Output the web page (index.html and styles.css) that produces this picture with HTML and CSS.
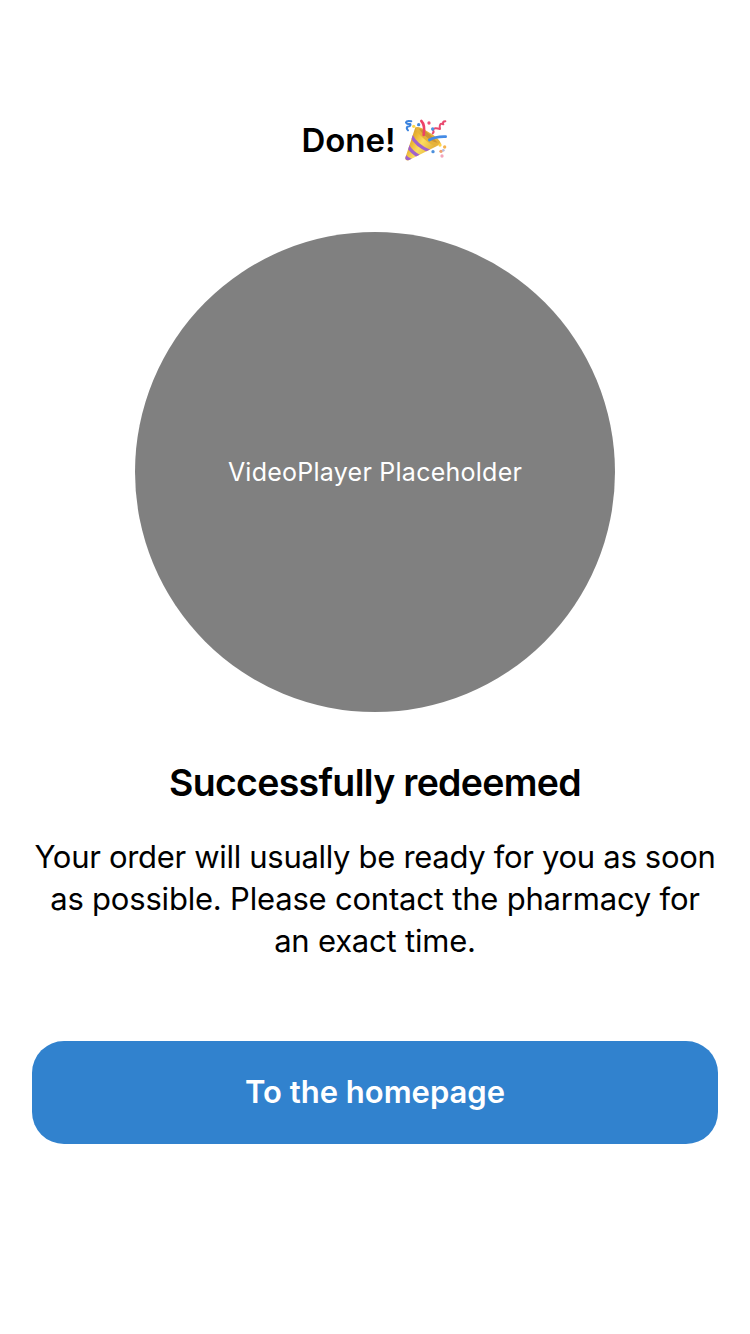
FILE: index.html
```html
<!DOCTYPE html>
<html lang="en">
<head>
<meta charset="utf-8">
<title>Done!</title>
<link rel="stylesheet" href="styles.css">
</head>
<body>
<main class="screen">
  <header class="title"><span>Done!</span>
    <svg class="popper" viewBox="0 0 180 180" role="img" aria-label="Party popper">
      <defs>
        <linearGradient id="gold" x1="0" y1="0.2" x2="1" y2="0.8">
          <stop offset="0" stop-color="#c98f22"/><stop offset=".3" stop-color="#eeb938"/><stop offset=".5" stop-color="#fbdc60"/><stop offset="1" stop-color="#d9a02c"/>
        </linearGradient>
        <clipPath id="cone"><path d="M61 52 L31 143 Q30 153 41 151 L126 108 Q99 94 61 52Z"/></clipPath>
      </defs>
      <path d="M61 52 L31 143 Q30 153 41 151 L126 108 Q99 94 61 52Z" fill="url(#gold)"/>
      <g clip-path="url(#cone)" fill="none" stroke="#a062cc" stroke-width="10">
        <path d="M49 77 Q62 106 104 124"/><path d="M38 107 Q50 128 74 140"/><path d="M27 136 Q35 147 50 152"/>
      </g>
      <path d="M61 52 Q72 47 99 65 Q133 84 138 101 L126 108 Q110 108 84 84 Q63 65 61 52Z" fill="#e6b23a"/>
      <path d="M72 56 Q88 59 105 74 Q117 85 128 98 Q110 96 90 77 Q78 67 72 56Z" fill="#cd9535"/>
      <g fill="none" stroke-linecap="round" stroke-linejoin="round">
        <path d="M79 33 Q91 45 86 75" stroke="#ed4267" stroke-width="8"/>
        <path d="M103 90 Q121 79 152 80" stroke="#448be5" stroke-width="8"/>
        <path d="M49 34 Q35 31 33 37 Q35 43 46 42 Q49 48 37 50 Q33 55 39 61" stroke="#3c83de" stroke-width="6"/>
        <path d="M151 34 Q141 34 145 43 Q131 37 135 57 Q117 51 114 60 Q118 67 113 70" stroke="#e94a70" stroke-width="6"/>
      </g>
      <circle cx="102" cy="39" r="5" fill="#ed527b"/><circle cx="71" cy="44" r="5" fill="#4689dc"/><circle cx="56" cy="49" r="5" fill="#ffd84c"/><circle cx="113" cy="57" r="5" fill="#4b92df"/>
      <circle cx="135" cy="105" r="5" fill="#ffd34a"/><circle cx="149" cy="111" r="5" fill="#f4b34e"/><circle cx="114" cy="125" r="5" fill="#4c90dc"/><circle cx="138" cy="124" r="5" fill="#f0a06d"/><circle cx="145" cy="121" r="4" fill="#b7b9df"/><circle cx="141" cy="138" r="5" fill="#f3a4ba"/>
    </svg>
  </header>
  <div class="player">VideoPlayer Placeholder</div>
  <h1 class="heading">Successfully redeemed</h1>
  <p class="message"><span class="line-wide">Your order will usually be ready for you as soon</span><br>as possible. Please contact the pharmacy for<br>an exact time.</p>
  <button class="home">To the homepage</button>
</main>
</body>
</html>
```
FILE: styles.css
```css
* { box-sizing: border-box; }
body { margin: 0; background: #fff; color: #000; font-family: Inter, "Liberation Sans", sans-serif; }
.screen { width: 750px; height: 1334px; padding: 110px 32px 0; display: flex; flex-direction: column; align-items: center; overflow: hidden; }
.title { height: 60px; padding-left: 6px; display: flex; align-items: center; font-size: 33px; font-weight: 600; line-height: 60px; }
.popper { width: 60px; height: 60px; flex: none; margin-left: -1px; }
.player { width: 480px; height: 480px; flex: none; margin-top: 62px; border-radius: 50%; background: #808080; color: #fff; display: flex; align-items: center; justify-content: center; font-size: 25px; letter-spacing: 0.25px; }
.heading { margin: 46px 0 0; font-size: 37.5px; line-height: 50px; font-weight: 600; letter-spacing: -0.7px; white-space: nowrap; }
.message { margin: 28px 0 0; font-size: 31px; line-height: 42px; letter-spacing: -0.2px; text-align: center; white-space: nowrap; }
.line-wide { letter-spacing: -0.31px; }
.home { width: 686px; height: 103px; flex: none; margin-top: 79px; padding: 0 0 2px; border: 0; border-radius: 32px; background: #3182ce; color: #fff; font: 600 31px/40px Inter, "Liberation Sans", sans-serif; }
```
